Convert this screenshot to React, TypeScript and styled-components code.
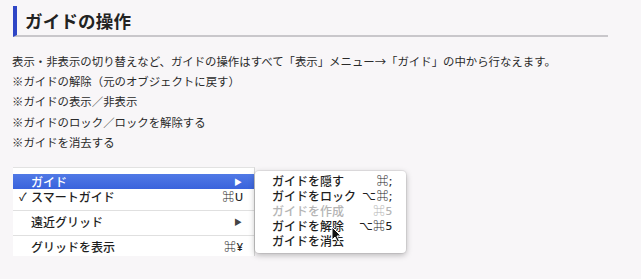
import React from "react";
import styled, { createGlobalStyle } from "styled-components";

const Global = createGlobalStyle`
  html, body { margin: 0; padding: 0; background: #f8f6f8; }
  body { font-family: "Noto Sans CJK JP", "Noto Sans", sans-serif; }
`;

const Page = styled.div`
  width: 641px;
  height: 279px;
  overflow: hidden;
  background: #f8f6f8;
  padding-top: 6px;
  box-sizing: border-box;
`;

const Heading = styled.h2`
  margin: 0 0 0 13px;
  width: 595px;
  height: 31px;
  box-sizing: border-box;
  border-left: 4px solid #2f46c6;
  border-bottom: 2px solid #c9c7cb;
  padding-left: 8px;
  font-size: 17.5px;
  font-weight: 700;
  color: #222;
  line-height: 29px;
  letter-spacing: 0.2px;
`;

const Body = styled.div`
  margin: 14px 0 0 12px;
  font-size: 11.4px;
  color: #2a2a2a;
  line-height: 20.2px;
`;

const Line = styled.p`
  margin: 0;
`;

const MenuArea = styled.div`
  position: relative;
  margin: 15px 0 0 13px;
  width: 242px;
  height: 89px;
`;

const MainMenu = styled.div`
  width: 242px;
  height: 89px;
  overflow: hidden;
  background: #fff;
  border-top: 1px solid #e2e2e2;
  border-right: 1px solid #d8d8d8;
  box-sizing: border-box;
  padding-top: 6px;
`;

const Row = styled.div<{ $active?: boolean }>`
  display: flex;
  align-items: center;
  height: 15px;
  line-height: 15px;
  padding: 0 10px 0 18px;
  position: relative;
  background: ${(p) => (p.$active ? "linear-gradient(#5079e6, #3a63dc)" : "transparent")};
  color: ${(p) => (p.$active ? "#fff" : "#1e1e1e")};
  font-size: 12px;
  font-weight: 500;
`;

const Check = styled.span`
  position: absolute;
  left: 6px;
  font-size: 11px;
`;

const Label = styled.span`
  flex: 1;
`;

const Shortcut = styled.span<{ $dim?: boolean }>`
  font-size: 11.5px;
  letter-spacing: 0.8px;
  color: ${(p) => (p.$dim ? "#b4b4b4" : "inherit")};
  font-family: "Noto Sans", "Noto Sans CJK JP", sans-serif;
`;

const Arrow = styled.span<{ $light?: boolean }>`
  font-size: 8px;
  color: ${(p) => (p.$light ? "#fff" : "#444")};
  margin-right: 2px;
`;

const Separator = styled.div`
  height: 1px;
  background: #e0e0e0;
  margin: 6px 0 3px;
`;

const SubMenu = styled.div`
  position: absolute;
  left: 242px;
  top: 4px;
  width: 151px;
  height: 82px;
  box-sizing: border-box;
  background: #fff;
  border-radius: 4px;
  box-shadow: 0 2px 6px rgba(0, 0, 0, 0.28), 0 0 0 1px rgba(0, 0, 0, 0.06);
  padding: 2px 13px 0 17px;
`;

const SubRow = styled.div<{ $disabled?: boolean }>`
  display: flex;
  align-items: center;
  height: 15px;
  line-height: 15px;
  font-size: 12px;
  font-weight: 500;
  color: ${(p) => (p.$disabled ? "#b4b4b4" : "#1e1e1e")};
`;

const Cursor = styled.svg`
  position: absolute;
  left: 318px;
  top: 59px;
`;

export default function App() {
  return (
    <Page>
      <Global />
      <Heading>ガイドの操作</Heading>
      <Body>
        <Line>表示・非表示の切り替えなど、ガイドの操作はすべて「表示」メニュー→「ガイド」の中から行なえます。</Line>
        <Line>※ガイドの解除（元のオブジェクトに戻す）</Line>
        <Line>※ガイドの表示／非表示</Line>
        <Line>※ガイドのロック／ロックを解除する</Line>
        <Line>※ガイドを消去する</Line>
      </Body>
      <MenuArea>
        <MainMenu>
          <Row $active>
            <Label>ガイド</Label>
            <Arrow $light>▶</Arrow>
          </Row>
          <Row>
            <Check>✓</Check>
            <Label>スマートガイド</Label>
            <Shortcut>⌘U</Shortcut>
          </Row>
          <Separator />
          <Row>
            <Label>遠近グリッド</Label>
            <Arrow>▶</Arrow>
          </Row>
          <Separator />
          <Row>
            <Label>グリッドを表示</Label>
            <Shortcut>⌘¥</Shortcut>
          </Row>
        </MainMenu>
        <SubMenu>
          <SubRow>
            <Label>ガイドを隠す</Label>
            <Shortcut>⌘;</Shortcut>
          </SubRow>
          <SubRow>
            <Label>ガイドをロック</Label>
            <Shortcut>⌥⌘;</Shortcut>
          </SubRow>
          <SubRow $disabled>
            <Label>ガイドを作成</Label>
            <Shortcut $dim>⌘5</Shortcut>
          </SubRow>
          <SubRow>
            <Label>ガイドを解除</Label>
            <Shortcut>⌥⌘5</Shortcut>
          </SubRow>
          <SubRow>
            <Label>ガイドを消去</Label>
          </SubRow>
        </SubMenu>
        <Cursor width="11" height="17" viewBox="0 0 11 17">
          <path d="M1 1 L1 14 L4 11 L6.5 16 L8.5 15 L6 10 L10 10 Z" fill="#111" stroke="#fff" strokeWidth="1" />
        </Cursor>
      </MenuArea>
    </Page>
  );
}
